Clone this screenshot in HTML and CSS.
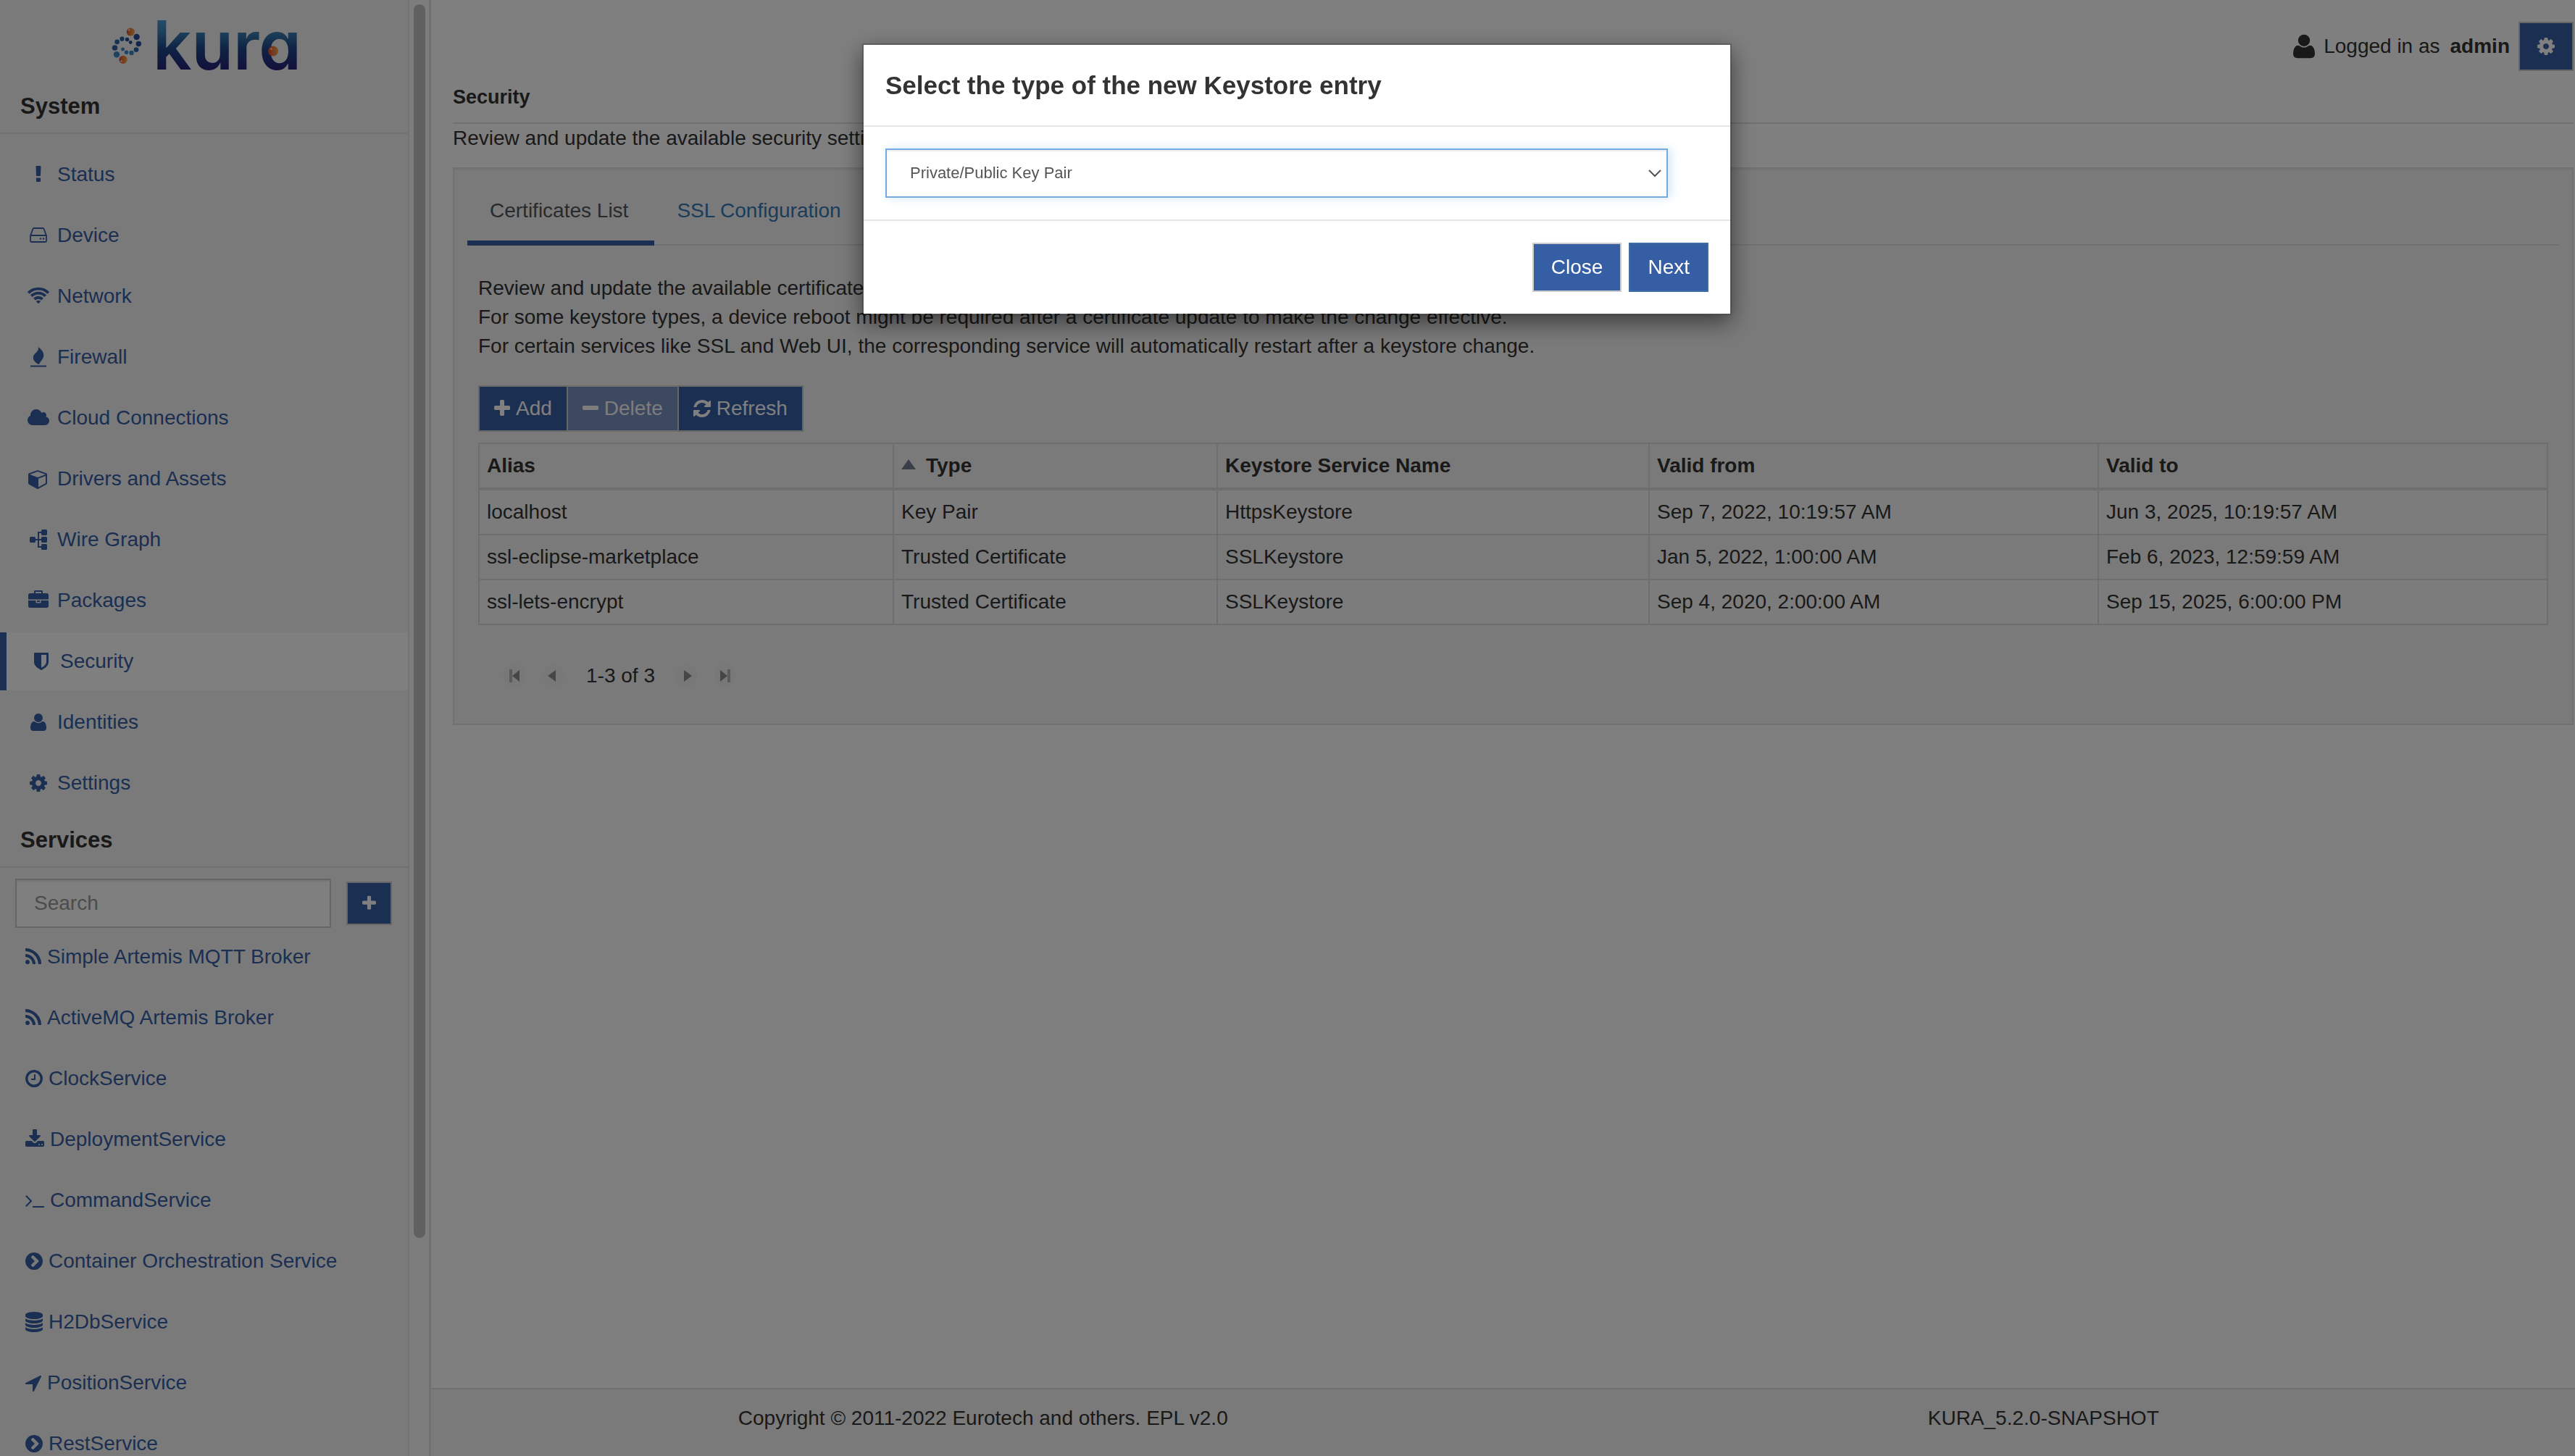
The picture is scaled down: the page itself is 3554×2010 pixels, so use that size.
FILE: index.html
```html
<!DOCTYPE html>
<html lang="en">
<head>
<meta charset="utf-8">
<title>Kura - Security</title>
<link rel="stylesheet" href="styles.css">
</head>
<body>
<svg class="sprite" aria-hidden="true">
  <symbol id="i-exclamation" viewBox="0 0 1792 1792"><path d="M1088 1248v224q0 26-19 45t-45 19h-256q-26 0-45-19t-19-45v-224q0-26 19-45t45-19h256q26 0 45 19t19 45zm30-1056l-28 768q-1 26-20.500 45t-45.500 19h-256q-26 0-45.500-19t-20.500-45l-28-768q-1-26 17.500-45t44.500-19h320q26 0 44.500 19t17.500 45z"/></symbol>
  <symbol id="i-hdd" viewBox="0 0 28 28"><path d="M3 14.500 6.300 5.200Q6.700 4 8 4H20Q21.300 4 21.700 5.200L25 14.500V21.500Q25 23 23.500 23H4.500Q3 23 3 21.500ZM3 14H25" fill="none" stroke="currentColor" stroke-width="1.800"/><circle cx="17" cy="18.500" r="1.200"/><circle cx="21" cy="18.500" r="1.200"/></symbol>
  <symbol id="i-wifi" viewBox="0 0 32 28"><g fill="none" stroke="currentColor" stroke-width="3.900"><path d="M2.200 9.300A19.500 19.500 0 0 1 29.800 9.300"/><path d="M6.300 13.700A13.700 13.700 0 0 1 25.700 13.700"/><path d="M10.500 18A8 8 0 0 1 21.500 18"/></g><path d="M16 24.200 12.800 21Q16 18.500 19.200 21Z"/></symbol>
  <symbol id="i-fire" viewBox="0 0 28 28"><path d="M13.800 0C17.500 3 21.500 6.500 21.300 12C21 17 16.500 19.500 15 24C9.500 22 6.500 18 6.800 14C7.200 8.500 15.500 7 13.800 0ZM3 25.500H25V27.500H3Z"/></symbol>
  <symbol id="i-cloud" viewBox="0 0 2048 1792"><path d="M1984 1152q0 159-112.500 271.500t-271.500 112.500h-1088q-185 0-316.500-131.500t-131.500-316.500q0-132 71-241.500t187-163.500q-2-28-2-43 0-212 150-362t362-150q158 0 286.500 88t187.500 230q70-62 166-62 106 0 181 75t75 181q0 75-41 138 129 30 213 134.500t84 239.500z"/></symbol>
  <symbol id="i-cube" viewBox="0 0 1792 1792"><path d="M896 1629l640-349v-636l-640 233v752zm-64-865l698-254-698-254-698 254zm832-252v768q0 35-18 65t-49 47l-704 384q-28 16-61 16t-61-16l-704-384q-31-17-49-47t-18-65v-768q0-40 23-73t61-47l704-256q22-8 44-8t44 8l704 256q38 14 61 47t23 73z"/></symbol>
  <symbol id="i-graph" viewBox="0 0 28 28"><rect x="2" y="10" width="8" height="8" rx="1.500"/><rect x="18" y="0" width="8" height="8" rx="1.500"/><rect x="18" y="10" width="8" height="8" rx="1.500"/><rect x="18" y="20" width="8" height="8" rx="1.500"/><path d="M9 14H19M19 4H14V24H19" fill="none" stroke="currentColor" stroke-width="2"/></symbol>
  <symbol id="i-briefcase" viewBox="0 0 1792 1792"><path d="M640 256h512v-128h-512v128zm1152 640v480q0 66-47 113t-113 47h-1472q-66 0-113-47t-47-113v-480h672v160q0 26 19 45t45 19h320q26 0 45-19t19-45v-160h672zm-768 0v128h-256v-128h256zm768-480v384h-1792v-384q0-66 47-113t113-47h352v-160q0-40 28-68t68-28h576q40 0 68 28t28 68v160h352q66 0 113 47t47 113z"/></symbol>
  <symbol id="i-shield" viewBox="0 0 1792 1792"><path d="M1344 960v-640h-448v1137q119-63 213-137 235-184 235-360zm192-768v768q0 86-33.500 170.500t-83 150-118 127.500-126.500 103-121 77.500-89.500 49.500-42.500 20q-12 6-26 6t-26-6q-16-7-42.500-20t-89.500-49.500-121-77.500-126.500-103-118-127.500-83-150-33.500-170.500v-768q0-26 19-45t45-19h1152q26 0 45 19t19 45z"/></symbol>
  <symbol id="i-user" viewBox="192 0 1408 1792"><path d="M1600 1405q0 120-73 189.500t-194 69.500h-874q-121 0-194-69.500t-73-189.500q0-53 3.500-103.500t14-109 26.500-108.500 43-97.500 62-81 85.500-53.500 111.500-20q9 0 42 21.500t74.500 48 108 48 133.500 21.500 133.500-21.500 108-48 74.500-48 42-21.500q61 0 111.500 20t85.500 53.500 62 81 43 97.500 26.500 108.500 14 109 3.500 103.500zm-320-893q0 159-112.500 271.500t-271.500 112.500-271.500-112.500-112.500-271.500 112.500-271.500 271.500-112.500 271.500 112.500 112.500 271.500z"/></symbol>
  <symbol id="i-cog" viewBox="128 0 1536 1792"><path d="M1152 896q0-106-75-181t-181-75-181 75-75 181 75 181 181 75 181-75 75-181zm512-109v222q0 12-8 23t-20 13l-185 28q-19 54-39 91 35 50 107 138 10 12 10 25t-9 23q-27 37-99 108t-94 71q-12 0-26-9l-138-108q-44 23-91 38-16 136-29 186-7 28-36 28h-222q-14 0-24.500-8.500t-11.500-21.500l-28-184q-49-16-90-37l-141 107q-10 9-25 9-14 0-25-11-126-114-165-168-7-10-7-23 0-12 8-23 15-21 51-66.500t54-70.500q-27-50-41-99l-183-27q-13-2-21-12.500t-8-23.500v-222q0-12 8-23t19-13l186-28q14-46 39-92-40-57-107-138-10-12-10-24 0-10 9-23 26-36 98.500-107.500t94.500-71.500q13 0 26 10l138 107q44-23 91-38 16-136 29-186 7-28 36-28h222q14 0 24.500 8.500t11.500 21.500l28 184q49 16 90 37l142-107q9-9 24-9 13 0 25 10 129 119 165 170 7 8 7 22 0 12-8 23-15 21-51 66.500t-54 70.500q26 50 41 98l183 28q13 2 21 12.500t8 23.500z"/></symbol>
  <symbol id="i-plus" viewBox="192 0 1408 1792"><path d="M1600 736v192q0 40-28 68t-68 28h-416v416q0 40-28 68t-68 28h-192q-40 0-68-28t-28-68v-416h-416q-40 0-68-28t-28-68v-192q0-40 28-68t68-28h416v-416q0-40 28-68t68-28h192q40 0 68 28t28 68v416h416q40 0 68 28t28 68z"/></symbol>
  <symbol id="i-minus" viewBox="192 0 1408 1792"><path d="M1600 736v192q0 40-28 68t-68 28h-1216q-40 0-68-28t-28-68v-192q0-40 28-68t68-28h1216q40 0 68 28t28 68z"/></symbol>
  <symbol id="i-refresh" viewBox="128 0 1536 1792"><path d="M1639 1056q0 5-1 7-64 268-268 434.500t-478 166.500q-146 0-282.500-55t-243.500-157l-129 129q-19 19-45 19t-45-19-19-45v-448q0-26 19-45t45-19h448q26 0 45 19t19 45-19 45l-137 137q71 66 161 102t187 36q134 0 250-65t186-179q11-17 53-117 8-23 30-23h192q13 0 22.500 9.500t9.500 22.500zm25-800v448q0 26-19 45t-45 19h-448q-26 0-45-19t-19-45 19-45l138-138q-148-137-349-137-134 0-250 65t-186 179q-11 17-53 117-8 23-30 23h-199q-13 0-22.500-9.500t-9.500-22.500v-7q65-268 270-434.500t480-166.500q146 0 284 55.500t245 156.500l130-129q19-19 45-19t45 19 19 45z"/></symbol>
  <symbol id="i-rss" viewBox="192 0 1408 1792"><path d="M576 1344q0 80-56 136t-136 56-136-56-56-136 56-136 136-56 136 56 56 136zm512 123q2 28-17 48-18 21-47 21h-135q-25 0-43-16.500t-20-41.500q-22-229-184.500-391.500t-391.500-184.500q-25-2-41.500-20t-16.500-43v-135q0-29 21-47 17-17 43-17h5q160 13 306 80.500t259 181.500q114 113 181.500 259t80.500 306zm512 2q2 27-18 47-18 20-46 20h-143q-26 0-44.500-17.500t-19.500-42.500q-12-215-101-408.500t-231.500-336-336-231.500-408.500-102q-25-1-42.500-19.500t-17.500-43.500v-143q0-28 20-46 18-18 44-18h3q262 13 501.500 120t425.500 294q187 186 294 425.500t120 501.500z"/></symbol>
  <symbol id="i-clock" viewBox="128 0 1536 1792"><path d="M1024 544v448q0 14-9 23t-23 9h-320q-14 0-23-9t-9-23v-64q0-14 9-23t23-9h224v-352q0-14 9-23t23-9h64q14 0 23 9t9 23zm416 352q0-148-73-273t-198-198-273-73-273 73-198 198-73 273 73 273 198 198 273 73 273-73 198-198 73-273zm224 0q0 209-103 385.500t-279.500 279.500-385.500 103-385.500-103-279.500-279.500-103-385.500 103-385.500 279.500-279.500 385.500-103 385.500 103 279.500 279.500 103 385.500z"/></symbol>
  <symbol id="i-download" viewBox="64 0 1664 1792"><path d="M1344 1344q0-26-19-45t-45-19-45 19-19 45 19 45 45 19 45-19 19-45zm256 0q0-26-19-45t-45-19-45 19-19 45 19 45 45 19 45-19 19-45zm128-224v320q0 40-28 68t-68 28h-1472q-40 0-68-28t-28-68v-320q0-40 28-68t68-28h465l135 136q58 56 136 56t136-56l136-136h464q40 0 68 28t28 68zm-325-569q17 41-14 70l-448 448q-18 19-45 19t-45-19l-448-448q-31-29-14-70 17-39 59-39h256v-448q0-26 19-45t45-19h256q26 0 45 19t19 45v448h256q42 0 59 39z"/></symbol>
  <symbol id="i-terminal" viewBox="64 0 1664 1792"><path d="M649 983l-466 466q-10 10-23 10t-23-10l-50-50q-10-10-10-23t10-23l393-393-393-393q-10-10-10-23t10-23l50-50q10-10 23-10t23 10l466 466q10 10 10 23t-10 23zm1079 457v64q0 14-9 23t-23 9h-960q-14 0-23-9t-9-23v-64q0-14 9-23t23-9h960q14 0 23 9t9 23z"/></symbol>
  <symbol id="i-chevron" viewBox="128 0 1536 1792"><path d="M845 1395l454-454q19-19 19-45t-19-45l-454-454q-19-19-45-19t-45 19l-102 102q-19 19-19 45t19 45l307 307-307 307q-19 19-19 45t19 45l102 102q19 19 45 19t45-19zm819-499q0 209-103 385.500t-279.500 279.500-385.500 103-385.500-103-279.500-279.500-103-385.500 103-385.500 279.500-279.500 385.500-103 385.500 103 279.500 279.500 103 385.500z"/></symbol>
  <symbol id="i-database" viewBox="128 0 1536 1792"><path d="M896 768q237 0 443-43t325-127v170q0 69-103 128t-280 93.500-385 34.500-385-34.500-280-93.500-103-128v-170q119 84 325 127t443 43zm0 768q237 0 443-43t325-127v170q0 69-103 128t-280 93.500-385 34.500-385-34.500-280-93.500-103-128v-170q119 84 325 127t443 43zm0-384q237 0 443-43t325-127v170q0 69-103 128t-280 93.500-385 34.500-385-34.500-280-93.500-103-128v-170q119 84 325 127t443 43zm0-1152q208 0 385 34.500t280 93.500 103 128v128q0 69-103 128t-280 93.500-385 34.500-385-34.500-280-93.500-103-128v-128q0-69 103-128t280-93.500 385-34.500z"/></symbol>
  <symbol id="i-arrow" viewBox="192 0 1408 1792"><path d="M1593 349l-640 1280q-17 35-57 35-5 0-15-2-22-5-35.500-22.500t-13.500-39.500v-576h-576q-22 0-39.500-13.500t-22.500-35.500 4-42 29-30l1280-640q13-7 29-7 27 0 45 19 15 14 18.500 34.500t-6.500 39.500z"/></symbol>
</svg>

<div class="app">
  <aside class="sidebar">
    <div class="brand">
      <svg class="logo" viewBox="0 -21 280 122" role="img" aria-label="Kura">
        <defs>
          <linearGradient id="word" x1="0" y1="2" x2="0" y2="77" gradientUnits="userSpaceOnUse"><stop offset="0" stop-color="#4aa0d5"/><stop offset=".25" stop-color="#3f86b8"/><stop offset=".6" stop-color="#1c4489"/><stop offset="1" stop-color="#2a2077"/></linearGradient>
          <linearGradient id="ball"><stop offset="0" stop-color="#d9432c"/><stop offset=".4" stop-color="#e8743a"/><stop offset="1" stop-color="#f3a04a"/></linearGradient>
        </defs>
        <g fill="#2a4a9c"><circle cx="43.600" cy="30" r="4.200"/><circle cx="46.300" cy="39.500" r="3.700"/><circle cx="30.500" cy="33.500" r="2.700"/><circle cx="35.200" cy="37.500" r="2.400"/></g>
        <g fill="#2c62a8"><circle cx="23.400" cy="32.700" r="3.100"/><circle cx="16.600" cy="36.800" r="3.400"/><circle cx="13.500" cy="45" r="3.800"/><circle cx="43" cy="47.600" r="3.400"/></g>
        <g fill="#3a87c4"><circle cx="36.500" cy="52" r="3.200"/><circle cx="29.500" cy="51.300" r="2.700"/><circle cx="24.500" cy="47" r="2.400"/><circle cx="16" cy="54.300" r="4.200"/></g>
        <g fill="url(#ball)"><circle cx="35.300" cy="23" r="5.600"/><circle cx="25" cy="61.300" r="5.600"/></g>
        <g fill="#f6c4b0"><circle cx="33" cy="20.500" r="1.400"/><circle cx="22.500" cy="63.500" r="1.400"/></g>
        <text class="wordmark" x="66" y="75" fill="url(#word)">kura</text>
        <circle cx="232" cy="49.500" r="7" fill="url(#ball)"/>
        <circle cx="229.500" cy="46.500" r="1.600" fill="#f6c4b0"/>
      </svg>
    </div>
    <h2 class="side-title">System</h2>
    <nav class="side-nav system" aria-label="System">
      <a href="#"><svg class="icon fixed"><use href="#i-exclamation"/></svg>Status</a>
      <a href="#"><svg class="icon fixed"><use href="#i-hdd"/></svg>Device</a>
      <a href="#"><svg class="icon fixed"><use href="#i-wifi"/></svg>Network</a>
      <a href="#"><svg class="icon fixed"><use href="#i-fire"/></svg>Firewall</a>
      <a href="#"><svg class="icon fixed"><use href="#i-cloud"/></svg>Cloud Connections</a>
      <a href="#"><svg class="icon fixed"><use href="#i-cube"/></svg>Drivers and Assets</a>
      <a href="#"><svg class="icon fixed"><use href="#i-graph"/></svg>Wire Graph</a>
      <a href="#"><svg class="icon fixed"><use href="#i-briefcase"/></svg>Packages</a>
      <a href="#" class="active" aria-current="page"><svg class="icon fixed"><use href="#i-shield"/></svg>Security</a>
      <a href="#"><svg class="icon fixed"><use href="#i-user"/></svg>Identities</a>
      <a href="#"><svg class="icon fixed"><use href="#i-cog"/></svg>Settings</a>
    </nav>
    <h2 class="side-title">Services</h2>
    <div class="service-search">
      <input type="text" class="search" placeholder="Search" aria-label="Search services">
      <button type="button" class="btn btn-add" aria-label="Add service"><svg class="icon small"><use href="#i-plus"/></svg></button>
    </div>
    <nav class="side-nav" aria-label="Services">
      <a href="#"><svg class="icon w22"><use href="#i-rss"/></svg>Simple Artemis MQTT Broker</a>
      <a href="#"><svg class="icon w22"><use href="#i-rss"/></svg>ActiveMQ Artemis Broker</a>
      <a href="#"><svg class="icon"><use href="#i-clock"/></svg>ClockService</a>
      <a href="#"><svg class="icon w26"><use href="#i-download"/></svg>DeploymentService</a>
      <a href="#"><svg class="icon w26"><use href="#i-terminal"/></svg>CommandService</a>
      <a href="#"><svg class="icon"><use href="#i-chevron"/></svg>Container Orchestration Service</a>
      <a href="#"><svg class="icon"><use href="#i-database"/></svg>H2DbService</a>
      <a href="#"><svg class="icon w22"><use href="#i-arrow"/></svg>PositionService</a>
      <a href="#"><svg class="icon"><use href="#i-chevron"/></svg>RestService</a>
    </nav>
  </aside>
  <div class="scrollbar" aria-hidden="true"><div class="thumb"></div></div>

  <div class="page">
    <main class="content">
      <header class="page-header">
        <h1>Security</h1>
        <div class="account">
          <svg class="icon account-icon"><use href="#i-user"/></svg>
          <span>Logged in as</span>
          <strong>admin</strong>
          <button type="button" class="btn btn-gear" aria-label="Account settings"><svg class="icon"><use href="#i-cog"/></svg></button>
        </div>
      </header>
      <p>Review and update the available security settings.</p>
      <section class="well">
        <div class="tabs" role="tablist">
          <a href="#" role="tab" class="active" aria-selected="true">Certificates List</a>
          <a href="#" role="tab">SSL Configuration</a>
        </div>
        <div class="tab-body">
          <p>Review and update the available certificates and keys.<br>For some keystore types, a device reboot might be required after a certificate update to make the change effective.<br>For certain services like SSL and Web UI, the corresponding service will automatically restart after a keystore change.</p>
          <div class="btn-group">
            <button type="button" class="btn"><svg class="icon w22"><use href="#i-plus"/></svg>Add</button>
            <button type="button" class="btn" disabled><svg class="icon w22"><use href="#i-minus"/></svg>Delete</button>
            <button type="button" class="btn"><svg class="icon"><use href="#i-refresh"/></svg>Refresh</button>
          </div>
          <table>
            <colgroup><col class="c-alias"><col class="c-type"><col class="c-service"><col class="c-date"><col class="c-date"></colgroup>
            <thead>
              <tr><th>Alias</th><th class="sorted">Type</th><th>Keystore Service Name</th><th>Valid from</th><th>Valid to</th></tr>
            </thead>
            <tbody>
              <tr><td>localhost</td><td>Key Pair</td><td>HttpsKeystore</td><td>Sep 7, 2022, 10:19:57 AM</td><td>Jun 3, 2025, 10:19:57 AM</td></tr>
              <tr><td>ssl-eclipse-marketplace</td><td>Trusted Certificate</td><td>SSLKeystore</td><td>Jan 5, 2022, 1:00:00 AM</td><td>Feb 6, 2023, 12:59:59 AM</td></tr>
              <tr><td>ssl-lets-encrypt</td><td>Trusted Certificate</td><td>SSLKeystore</td><td>Sep 4, 2020, 2:00:00 AM</td><td>Sep 15, 2025, 6:00:00 PM</td></tr>
            </tbody>
          </table>
          <div class="pager">
            <button type="button" disabled aria-label="First page"><svg viewBox="0 0 30 30"><path class="bar" d="M8 6h4v18H8z"/><path d="M22 7v16l-10-8z"/></svg></button>
            <button type="button" disabled aria-label="Previous page"><svg viewBox="0 0 30 30"><path d="M18 7v16l-11-8z"/></svg></button>
            <span>1-3 of 3</span>
            <button type="button" disabled aria-label="Next page"><svg viewBox="0 0 30 30"><path d="M12 7v16l11-8z"/></svg></button>
            <button type="button" disabled aria-label="Last page"><svg viewBox="0 0 30 30"><path class="bar" d="M18 6h4v18h-4z"/><path d="M8 7v16l10-8z"/></svg></button>
          </div>
        </div>
      </section>
    </main>
    <footer class="page-footer">
      <span>Copyright © 2011-2022 Eurotech and others. EPL v2.0</span>
      <span>KURA_5.2.0-SNAPSHOT</span>
    </footer>
  </div>
</div>

<div class="backdrop">
  <div class="modal" role="dialog" aria-modal="true" aria-labelledby="modal-title">
    <div class="modal-header"><h2 id="modal-title">Select the type of the new Keystore entry</h2></div>
    <div class="modal-body">
      <div class="select">
        <select aria-label="Keystore entry type"><option>Private/Public Key Pair</option><option>Trusted Certificate</option></select>
        <svg class="caret" viewBox="0 0 18 12"><path d="M1 2l8 8 8-8"/></svg>
      </div>
    </div>
    <div class="modal-footer">
      <button type="button" class="btn">Close</button>
      <button type="button" class="btn btn-primary">Next</button>
    </div>
  </div>
</div>
</body>
</html>
```
FILE: styles.css
```css
* { box-sizing: border-box; }

body {
  margin: 0;
  background: #fff;
  color: #333;
  font: 28px/40px "Liberation Sans", Arial, sans-serif;
}

h1, h2, p { margin: 0; }
h1 { font-size: 27px; line-height: 40px; }
button, input, select { font: inherit; margin: 0; }

.sprite { position: absolute; width: 0; height: 0; }
.icon { width: 24px; height: 28px; flex: none; fill: currentColor; }
.icon.fixed { width: 36px; }
.icon.small { width: 19px; height: 24px; }
.icon.w22 { width: 22px; }
.icon.w26 { width: 26px; }

.app {
  display: grid;
  grid-template-columns: 565px 30px 1fr;
  height: 100vh;
  overflow: hidden;
}

/* Sidebar */
.sidebar {
  min-height: 0;
  overflow: hidden;
  background: #f5f5f5;
  border-right: 2px solid #e7e7e7;
}
.brand { padding-left: 145px; }
.logo { display: block; width: 280px; height: 122px; }
.wordmark {
  font: 600 94px Inter, sans-serif;
  font-feature-settings: "cv11";
}
.side-title {
  padding: 5px 28px 16px;
  border-bottom: 2px solid #e0e0e0;
  font-size: 31px;
  line-height: 40px;
}
.side-nav { display: flex; flex-direction: column; gap: 4px; }
.side-nav.system { padding: 16px 0 0; }
.side-nav a {
  display: flex;
  align-items: center;
  gap: 8px;
  height: 80px;
  flex: none;
  padding: 0 35px;
  color: #365ea4;
  text-decoration: none;
}
.side-nav a.active {
  padding-left: 30px;
  background: #fff;
  border-left: 9px solid #365ea4;
}
.system + .side-title { padding-top: 19px; }
.service-search {
  display: flex;
  align-items: center;
  gap: 21px;
  padding: 15px 22px 0 21px;
}
.search {
  flex: 1;
  min-width: 0;
  height: 68px;
  padding: 0 24px;
  border: 2px solid #ccc;
  border-radius: 0;
  background: #fff;
  box-shadow: inset 0 2px 2px rgba(0, 0, 0, .075);
}
.search::placeholder { color: #999; opacity: 1; }

.scrollbar {
  padding: 6px 0 0 6px;
  background: #fafafa;
  border-right: 3px solid #e0e0e0;
}
.thumb { width: 16px; height: 85%; border-radius: 8px; background: #c1c1c1; }

/* Buttons */
.btn {
  display: flex;
  align-items: center;
  justify-content: center;
  gap: 8px;
  height: 68px;
  padding: 0 24px;
  border: 2px solid #ccc;
  border-radius: 0;
  background: #365ea4;
  color: #fff;
}
.btn:disabled { opacity: .65; }
.btn-add { width: 63px; height: 60px; padding: 0; }
.btn-gear { width: 76px; margin-left: 4px; padding: 0; }
.btn-primary { border-color: #3b6ea5; }
.btn-group { display: flex; margin-top: 34px; }
.btn-group .btn { height: 64px; padding: 0 20px; }
.btn-group .btn + .btn { margin-left: -2px; }

/* Main column */
.page { display: flex; flex-direction: column; min-width: 0; }
.content { flex: 1; padding: 30px 2px 0 30px; }
.page-header {
  display: flex;
  justify-content: space-between;
  height: 141px;
  border-bottom: 2px solid #e0e0e0;
}
.page-header h1 { align-self: flex-end; padding-bottom: 15px; }
.account { display: flex; align-items: center; gap: 8px; height: 68px; }
.account strong { padding-left: 6px; }
.account-icon { width: 30px; height: 38px; margin-right: 4px; }

.well {
  margin-top: 20px;
  padding: 18px 18px 46px;
  background: #f5f5f5;
  border: 2px solid #e3e3e3;
  box-shadow: inset 0 2px 2px rgba(0, 0, 0, .05);
}
.tabs { display: flex; border-bottom: 2px solid #e0e0e0; }
.tabs a {
  margin-bottom: -2px;
  padding: 20px 36px 21px 31px;
  border-bottom: 7px solid transparent;
  color: #337ab7;
  text-decoration: none;
}
.tabs a.active { border-color: #365ea4; color: #555; }
.tab-body { padding: 39px 17px 0 15px; }

table {
  width: 100%;
  margin-top: 15px;
  border-collapse: collapse;
  table-layout: fixed;
}
.c-alias { width: 572px; }
.c-type { width: 447px; }
.c-service { width: 596px; }
.c-date { width: 620px; }
th, td { padding: 10px; border: 2px solid #ddd; text-align: left; }
thead th { border-bottom-width: 4px; }
tbody tr:nth-child(odd) { background: #f9f9f9; }
.sorted::before {
  content: "";
  display: inline-block;
  margin-right: 14px;
  border: 10px solid transparent;
  border-top: 0;
  border-bottom: 14px solid #747d90;
  vertical-align: 4px;
}

.pager {
  display: flex;
  align-items: center;
  gap: 24px;
  padding: 50px 35px 0;
}
.pager span { padding: 0 4px 0 6px; }
.pager button {
  width: 30px;
  height: 30px;
  padding: 0;
  border: 0;
  border-radius: 50%;
  background: #f0f0f0;
}
.pager svg { display: block; width: 30px; height: 30px; fill: #8c8c8c; }
.pager .bar { fill: #b4b4b4; }

.page-footer {
  display: grid;
  grid-template-columns: 1fr 1fr;
  padding: 20px 2px 32px 30px;
  background: #f5f5f5;
  border-top: 2px solid #e0e0e0;
  text-align: center;
}

/* Modal */
.backdrop {
  position: fixed;
  inset: 0;
  padding: 60px 0 0 26px;
  background: rgba(0, 0, 0, .5);
}
.modal {
  width: 1200px;
  margin: 0 auto;
  background: #fff;
  background-clip: padding-box;
  border: 2px solid rgba(0, 0, 0, .2);
  box-shadow: 0 10px 30px rgba(0, 0, 0, .5);
}
.modal-header { padding: 32px 30px 31px; border-bottom: 2px solid #e5e5e5; }
.modal-header h2 { font-size: 35px; line-height: 48px; }
.modal-body { padding: 30px; }
.select { position: relative; width: 1080px; }
.select select {
  display: block;
  width: 100%;
  height: 68px;
  padding: 0 32px;
  appearance: none;
  border: 2px solid #73abe1;
  border-radius: 0;
  outline: 0;
  background: #fff;
  box-shadow: inset 0 2px 2px rgba(0, 0, 0, .075), 4px 0 12px rgba(102, 175, 233, .3);
  color: #555;
  font-size: 22px;
}
.caret {
  position: absolute;
  right: 9px;
  top: 28px;
  width: 18px;
  height: 12px;
  fill: none;
  stroke: #555;
  stroke-width: 2;
  pointer-events: none;
}
.modal-footer {
  display: flex;
  justify-content: flex-end;
  gap: 10px;
  padding: 30px;
  border-top: 2px solid #e5e5e5;
}
```
